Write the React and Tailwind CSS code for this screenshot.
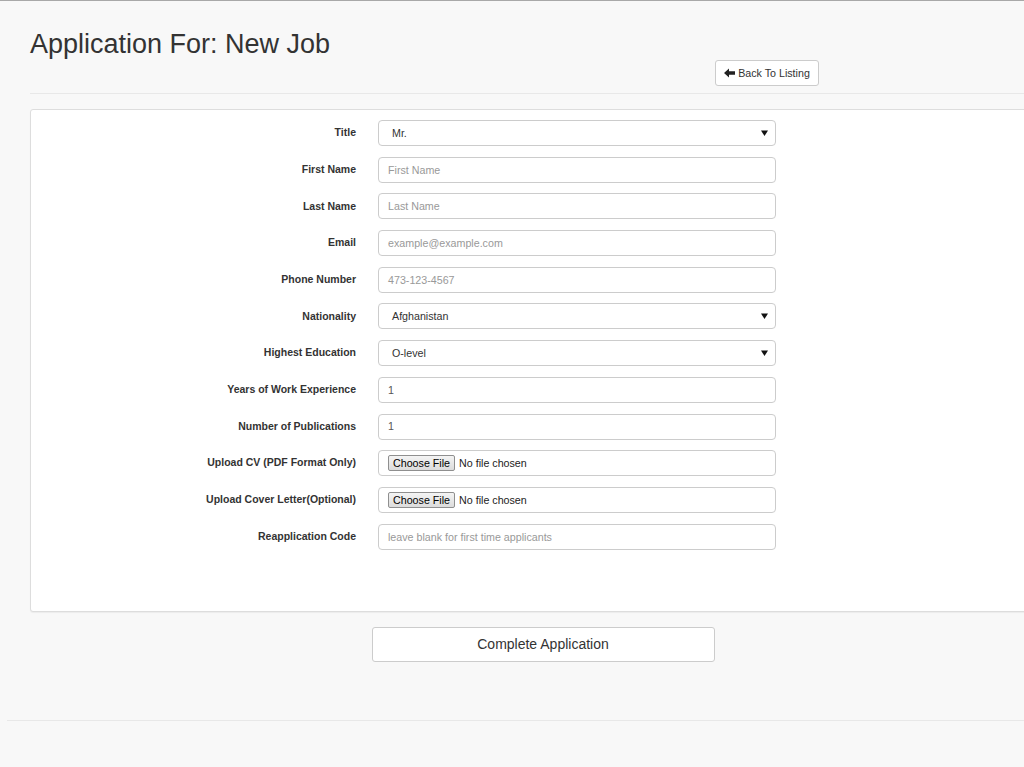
import React from "react";

const font = { fontFamily: '"Liberation Sans", Arial, sans-serif' };

function Caret() {
  return (
    <svg width="7" height="6" viewBox="0 0 7 6" className="shrink-0">
      <path d="M0 0.5 H7 L3.5 6 Z" fill="#111" />
    </svg>
  );
}

function Row({ label, children }) {
  return (
    <div className="flex items-center">
      <div className="w-[325px] text-right text-[10.5px] font-bold text-[#333]">{label}</div>
      <div className="ml-[22px] w-[398px]">{children}</div>
    </div>
  );
}

function TextInput({ placeholder, value }) {
  return (
    <div className="h-[26px] w-full bg-white border border-[#ccc] rounded-[4px] flex items-center px-[9px] text-[10.7px]">
      {value ? (
        <span className="text-[#555]">{value}</span>
      ) : (
        <span className="text-[#999]">{placeholder}</span>
      )}
    </div>
  );
}

function SelectInput({ value }) {
  return (
    <div className="h-[26px] w-full bg-white border border-[#ccc] rounded-[4px] flex items-center justify-between pl-[13px] pr-[7px] text-[10.7px] text-[#333]">
      <span>{value}</span>
      <Caret />
    </div>
  );
}

function FileInput() {
  return (
    <div className="h-[26px] w-full bg-white border border-[#ccc] rounded-[4px] flex items-center pl-[9px] text-[10.7px] text-[#333]">
      <span className="h-[16px] px-[4px] flex items-center border border-[#8f8f8f] rounded-[2px] bg-gradient-to-b from-[#f4f4f4] to-[#dcdcdc] text-black">
        Choose File
      </span>
      <span className="ml-[4px] text-[#222]">No file chosen</span>
    </div>
  );
}

export default function App() {
  return (
    <div className="min-h-[767px] w-[1024px] overflow-hidden bg-[#f8f8f8] border-t border-[#a8a8a8]" style={font}>
      <div className="ml-[30px] w-[1026px]">
        <h1 className="mt-[28px] text-[27px] leading-[30px] text-[#333] font-normal">Application For: New Job</h1>
        <div className="mt-[1px] pl-[685px]">
          <button className="h-[26px] w-[104px] bg-white border border-[#ccc] rounded-[3px] flex items-center justify-center gap-[3px] text-[10.7px] text-[#333]">
            <svg width="11" height="10" viewBox="0 0 11 10">
              <path d="M0 5 L5 0.5 V3.2 H11 V6.8 H5 V9.5 Z" fill="#222" />
            </svg>
            <span>Back To Listing</span>
          </button>
        </div>
        <div className="mt-[7px] border-t border-[#e8e8e8]" />
        <div className="mt-[15px] bg-white border border-[#ddd] rounded-[3px] shadow-[0_1px_1px_rgba(0,0,0,0.05)] pt-[10px] pb-[61px]">
          <div className="flex flex-col gap-[10.7px]">
            <Row label="Title"><SelectInput value="Mr." /></Row>
            <Row label="First Name"><TextInput placeholder="First Name" /></Row>
            <Row label="Last Name"><TextInput placeholder="Last Name" /></Row>
            <Row label="Email"><TextInput placeholder="example@example.com" /></Row>
            <Row label="Phone Number"><TextInput placeholder="473-123-4567" /></Row>
            <Row label="Nationality"><SelectInput value="Afghanistan" /></Row>
            <Row label="Highest Education"><SelectInput value="O-level" /></Row>
            <Row label="Years of Work Experience"><TextInput value="1" /></Row>
            <Row label="Number of Publications"><TextInput value="1" /></Row>
            <Row label="Upload CV (PDF Format Only)"><FileInput /></Row>
            <Row label="Upload Cover Letter(Optional)"><FileInput /></Row>
            <Row label="Reapplication Code"><TextInput placeholder="leave blank for first time applicants" /></Row>
          </div>
        </div>
        <div className="mt-[15px] flex justify-center">
          <button className="h-[35px] w-[343px] bg-white border border-[#ccc] rounded-[3px] text-[14px] text-[#333]">
            Complete Application
          </button>
        </div>
      </div>
      <div className="mt-[58px] ml-[7px] border-t border-[#e8e8e8]" />
    </div>
  );
}
